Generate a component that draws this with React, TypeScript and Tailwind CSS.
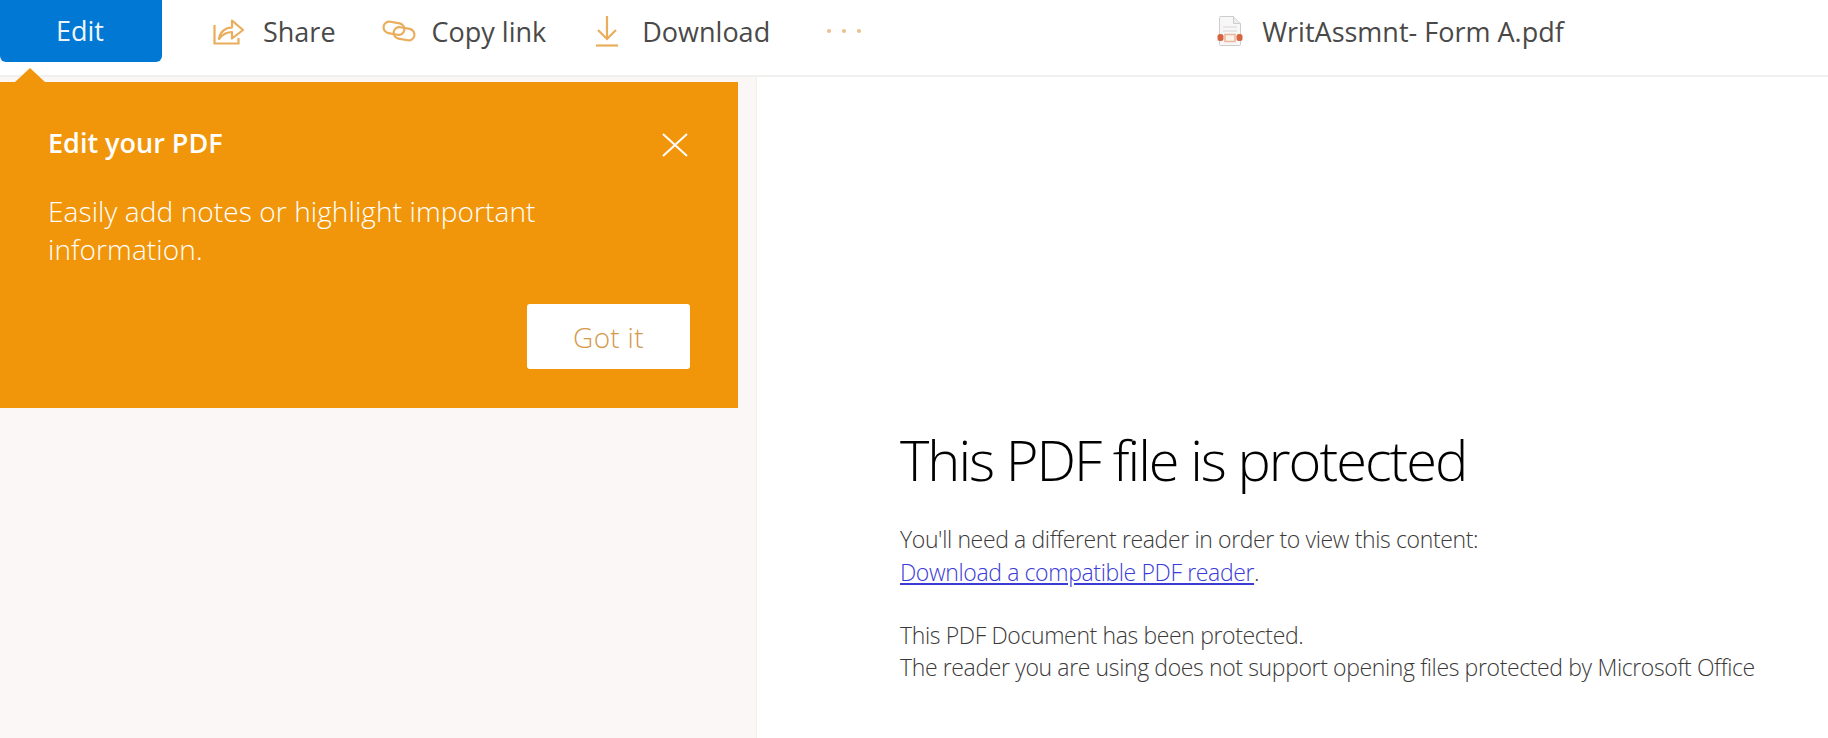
import React from "react";

const font = "font-['Open_Sans','Liberation_Sans',sans-serif]";

function ShareIcon() {
  return (
    <svg width="32" height="28" viewBox="0 0 32 28" fill="none" stroke="#e9ad5c" strokeWidth="2.200" className="shrink-0">
      <path d="M1.500 8v18.500h24V21" />
      <path d="M6 22c1-7 6-11.500 13-11.500V3.500l11 9.500-11 8.500v-6.500c-5.500 0-9.500 2.500-13 7z" strokeLinejoin="round" />
    </svg>
  );
}

function LinkIcon() {
  return (
    <svg width="34" height="22" viewBox="0 0 34 22" fill="none" stroke="#e9ad5c" strokeWidth="2.200" className="shrink-0">
      <rect x="1.500" y="2.500" width="21" height="11.500" rx="5.750" transform="rotate(10 12 8)" />
      <rect x="11.500" y="8" width="21" height="11.500" rx="5.750" transform="rotate(10 22 14)" />
    </svg>
  );
}

function DownloadIcon() {
  return (
    <svg width="22" height="32" viewBox="0 0 22 32" fill="none" stroke="#e9ad5c" strokeWidth="2.200" className="shrink-0">
      <path d="M11 1v23" />
      <path d="M2 15l9 9 9-9" />
      <path d="M0 30.500h22" />
    </svg>
  );
}

function PdfIcon() {
  return (
    <svg width="26" height="30" viewBox="0 0 26 30" className="shrink-0">
      <path d="M3.500 .5h13l7 7v21a1 1 0 0 1-1 1h-19a1 1 0 0 1-1-1v-27a1 1 0 0 1 1-1z" fill="#f7f7f7" stroke="#cfcdcb" />
      <path d="M16.500 .5v7h7" fill="#ececec" stroke="#cfcdcb" />
      <path d="M6 11h14M6 15h14" stroke="#d8d6d4" />
      <rect x="0.500" y="18" width="6" height="7" rx="2.500" fill="#d8643f" />
      <rect x="19.500" y="18" width="6" height="7" rx="2.500" fill="#d8643f" />
      <rect x="8" y="18.500" width="10" height="7" fill="#fbf3ea" stroke="#e8b79d" strokeWidth="1.500" />
    </svg>
  );
}

function NavItem({ icon, label, className }: { icon: React.ReactNode; label: string; className: string }) {
  return (
    <div className={`flex items-center ${className}`}>
      {icon}
      <span className="text-[27px] leading-none text-[#4a4948]">{label}</span>
    </div>
  );
}

export default function App() {
  return (
    <div className={`flex h-[738px] w-[1828px] flex-col overflow-hidden bg-white ${font}`}>
      <header className="flex h-[77px] shrink-0 items-start border-b-2 border-[#f0f0ef]">
        <button className="flex h-[62px] w-[162px] items-center justify-center rounded-b-[6px] bg-[#0078d4] pr-[2px] text-[27px] text-[#eef6fd]">
          Edit
        </button>
        <div className="flex h-[62px] items-center">
          <NavItem icon={<ShareIcon />} label="Share" className="ml-[51px] gap-[18px]" />
          <NavItem icon={<LinkIcon />} label="Copy link" className="ml-[46px] gap-[16px]" />
          <NavItem icon={<DownloadIcon />} label="Download" className="ml-[50px] gap-[24px]" />
          <div className="ml-[57px] flex gap-[11px]">
            <span className="h-[4px] w-[4px] rounded-full bg-[#e9c08a]" />
            <span className="h-[4px] w-[4px] rounded-full bg-[#e9c08a]" />
            <span className="h-[4px] w-[4px] rounded-full bg-[#e9c08a]" />
          </div>
          <NavItem icon={<PdfIcon />} label="WritAssmnt- Form A.pdf" className="ml-[356px] gap-[19px]" />
        </div>
      </header>
      <div className="flex flex-1">
        <aside className="w-[756px] shrink-0 bg-[#fbf7f6] pt-[5px]">
          <div className="relative flex h-[326px] w-[738px] flex-col bg-[#f1960a] pl-[48px] pr-[48px] text-white">
            <span className="absolute left-[15px] top-[-14px] h-0 w-0 border-x-[15px] border-b-[14px] border-x-transparent border-b-[#f1960a]" />
            <div className="mt-[43px] flex items-center justify-between">
              <h2 className="text-[27px] font-semibold leading-[36px]">Edit your PDF</h2>
              <svg width="26" height="24" viewBox="0 0 26 24" fill="none" stroke="white" strokeWidth="2" className="mr-[2px] mt-[3px]">
                <path d="M1 1l24 22M25 1L1 23" />
              </svg>
            </div>
            <p className="mt-[31px] w-[540px] text-[28px] font-light leading-[38px] tracking-[0.1px]">
              Easily add notes or highlight important information.
            </p>
            <div className="mt-auto mb-[39px] flex justify-end">
              <button className="flex h-[65px] w-[163px] items-center justify-center rounded-[3px] bg-white text-[28px] font-light tracking-[0.3px] text-[#d49a4e]">
                Got it
              </button>
            </div>
          </div>
        </aside>
        <main className="flex-1 border-l border-[#f3f1f0] pl-[143px] pt-[346px] text-[#3b3a39]">
          <h1 className="text-[56px] font-light leading-[72px] tracking-[-2px] text-black">This PDF file is protected</h1>
          <p className="mt-[28px] text-[23px] font-light leading-[32.500px] tracking-[-0.37px]">
            You'll need a different reader in order to view this content:
            <br />
            <a className="text-[#3b3bd6] underline">Download a compatible PDF reader</a>.
          </p>
          <p className="mt-[32px] text-[23px] font-light leading-[31.500px] tracking-[-0.37px]">
            This PDF Document has been protected.
            <br />
            The reader you are using does not support opening files protected by Microsoft Office
          </p>
        </main>
      </div>
    </div>
  );
}
